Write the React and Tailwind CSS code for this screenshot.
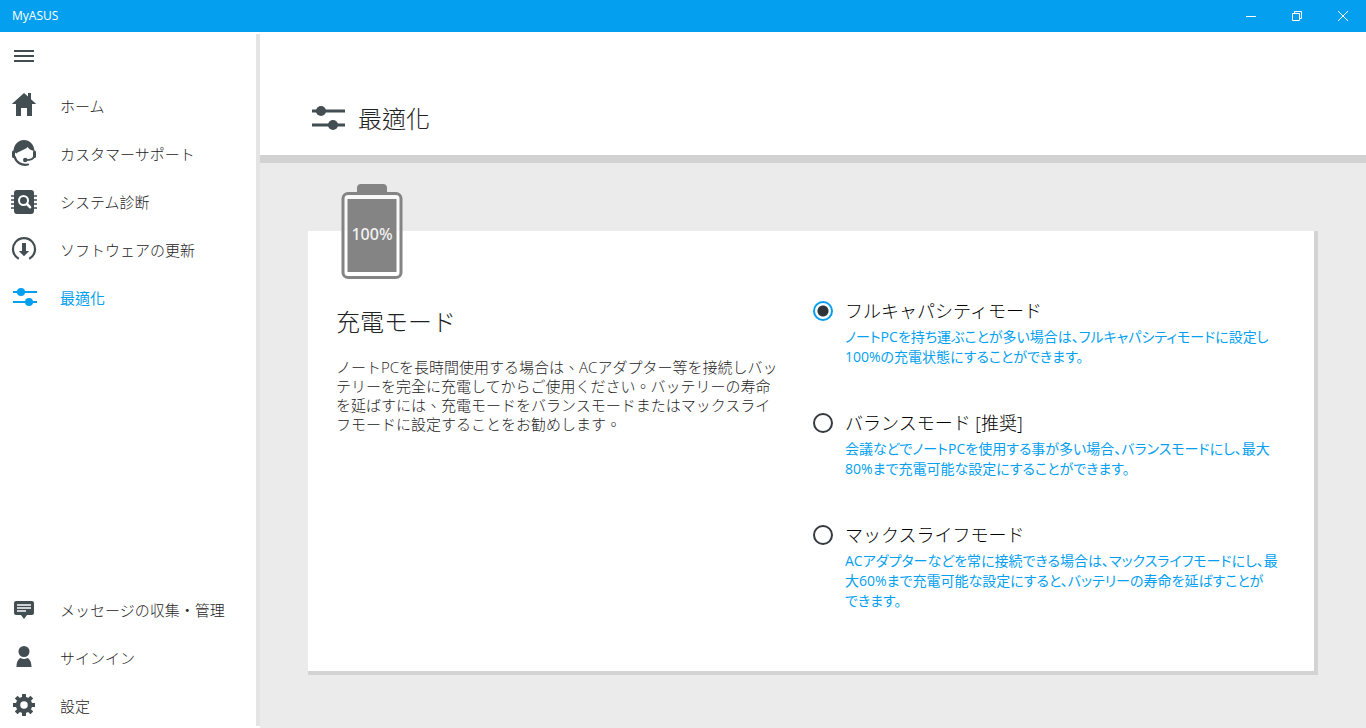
import { useState } from "react";
import clsx from "clsx";

const MODES = [
  {
    id: "full",
    title: "フルキャパシティモード",
    description:
      "ノートPCを持ち運ぶことが多い場合は、フルキャパシティモードに設定し\n100%の充電状態にすることができます。",
  },
  {
    id: "balanced",
    title: "バランスモード [推奨]",
    description:
      "会議などでノートPCを使用する事が多い場合、バランスモードにし、最大\n80%まで充電可能な設定にすることができます。",
  },
  {
    id: "maximum",
    title: "マックスライフモード",
    description:
      "ACアダプターなどを常に接続できる場合は、マックスライフモードにし、最\n大60%まで充電可能な設定にすると、バッテリーの寿命を延ばすことが\nできます。",
  },
];

const CHARGING_TEXT =
  "ノートPCを長時間使用する場合は、ACアダプター等を接続しバッ\nテリーを完全に充電してからご使用ください。バッテリーの寿命\nを延ばすには、充電モードをバランスモードまたはマックスライ\nフモードに設定することをお勧めします。";

function HomeIcon() {
  return (
    <svg width="26" height="26" viewBox="0 0 26 26" fill="currentColor" aria-hidden="true">
      <path d="M13 1 17 4.600V1h3v6.300l5.200 4.700H21v12h-5v-8h-6v8H5V12H.8z" />
    </svg>
  );
}

function SupportIcon() {
  return (
    <svg width="26" height="28" viewBox="0 0 26 28" fill="none" aria-hidden="true">
      <path
        d="M2.500 12C3 5 7.500 1 13 1s10 4 10.500 11c-3-.4-5.500-1.800-6.800-4C14 11 9 11.500 5.200 14.500z"
        fill="currentColor"
      />
      <path
        d="M2.500 13v4.500M23.500 13v4.500"
        stroke="currentColor"
        strokeWidth="3"
        strokeLinecap="round"
      />
      <path
        d="M3.500 17.500c1.500 6 7 9.300 13.500 8"
        stroke="currentColor"
        strokeWidth="2.200"
        strokeLinecap="round"
      />
      <path d="M23 17.500c-.8 3-4 3.700-8 3.700" stroke="currentColor" strokeWidth="1.800" />
      <circle cx="14.200" cy="21" r="2.200" fill="currentColor" />
    </svg>
  );
}

function DiagnosisIcon() {
  return (
    <svg width="26" height="26" viewBox="0 0 26 26" fill="none" aria-hidden="true">
      <rect x="3" y="2" width="20" height="24" rx="3" fill="currentColor" />
      <path
        d="M0 8h3M0 12h3M0 16h3M0 20h3M23 8h3M23 12h3M23 16h3M23 20h3"
        stroke="currentColor"
        strokeWidth="1.600"
      />
      <circle cx="12.500" cy="12.500" r="4.500" stroke="white" strokeWidth="2" />
      <path d="m16 16 3 3.200" stroke="white" strokeWidth="2.600" strokeLinecap="round" />
    </svg>
  );
}

function UpdateIcon() {
  return (
    <svg width="26" height="26" viewBox="0 0 26 26" fill="none" aria-hidden="true">
      <path d="M7.800 22.800A11 11 0 1 1 18.200 22.800" stroke="currentColor" strokeWidth="2.200" />
      <path d="M11 7h4v8h3.200L13 20.200 7.800 15H11z" fill="currentColor" />
    </svg>
  );
}

function SlidersIcon() {
  return (
    <svg width="26" height="20" viewBox="0 0 26 20" fill="none" aria-hidden="true">
      <path d="M2 5h24M2 15h24" stroke="currentColor" strokeWidth="2" />
      <circle cx="10" cy="5" r="4" fill="currentColor" />
      <circle cx="18" cy="15" r="4" fill="currentColor" />
    </svg>
  );
}

function MessageIcon() {
  return (
    <svg width="20" height="20" viewBox="0 0 20 20" fill="none" aria-hidden="true">
      <path
        d="M2 2h16a2 2 0 0 1 2 2v10a2 2 0 0 1-2 2h-5l-3 4-3-4H2a2 2 0 0 1-2-2V4a2 2 0 0 1 2-2z"
        fill="currentColor"
      />
      <path d="M3 6h14M3 9h14M3 12h9" stroke="white" strokeWidth="1.400" />
    </svg>
  );
}

function PersonIcon() {
  return (
    <svg width="20" height="22" viewBox="0 0 20 22" fill="currentColor" aria-hidden="true">
      <circle cx="10" cy="5.500" r="5.500" />
      <path d="M2.500 21c0-5 1.500-7.500 4-9 2 1.200 5 1.200 7 0 2.500 1.500 4 4 4 9z" />
    </svg>
  );
}

function GearIcon() {
  return (
    <svg width="24" height="24" viewBox="0 0 24 24" fill="none" aria-hidden="true">
      <circle cx="12" cy="12" r="6" stroke="currentColor" strokeWidth="4.500" />
      <path
        d="M12 1v4M12 19v4M1 12h4M19 12h4M4.200 4.200l3 3M16.800 16.800l3 3M19.800 4.200l-3 3M7.200 16.800l-3 3"
        stroke="currentColor"
        strokeWidth="4"
      />
    </svg>
  );
}

function BatteryIcon() {
  return (
    <svg width="62" height="96" viewBox="0 0 62 96" role="img" aria-label="100%">
      <path d="M16 10V5a4 4 0 0 1 4-4h22a4 4 0 0 1 4 4v5z" fill="#848484" />
      <rect
        x="2"
        y="10.500"
        width="58"
        height="84"
        rx="5"
        fill="white"
        fillOpacity=".7"
        stroke="#848484"
        strokeWidth="3"
      />
      <rect x="6.500" y="16" width="49" height="73" fill="#848484" />
      <text
        x="31"
        y="57"
        textAnchor="middle"
        fill="#f2f2f2"
        className="font-['Noto_Sans'] text-[16px] font-medium"
      >
        100%
      </text>
    </svg>
  );
}

const TOP_ITEMS = [
  { label: "ホーム", Icon: HomeIcon },
  { label: "カスタマーサポート", Icon: SupportIcon },
  { label: "システム診断", Icon: DiagnosisIcon },
  { label: "ソフトウェアの更新", Icon: UpdateIcon },
  { label: "最適化", Icon: SlidersIcon, active: true },
];

const BOTTOM_ITEMS = [
  { label: "メッセージの収集・管理", Icon: MessageIcon },
  { label: "サインイン", Icon: PersonIcon },
  { label: "設定", Icon: GearIcon },
];

function NavItem({ label, Icon, active }) {
  return (
    <a
      href="#"
      aria-current={active ? "page" : undefined}
      className={clsx("flex h-12 items-center", active ? "text-[#059ff0]" : "text-[#434e52]")}
    >
      <span className="flex w-12 shrink-0 justify-center pt-0.5">
        <Icon />
      </span>
      <span
        className={clsx(
          "pt-1 pl-3 text-[15px] leading-5",
          active ? "font-normal" : "text-[#1d2224]"
        )}
      >
        {label}
      </span>
    </a>
  );
}

function TitleBar() {
  return (
    <header className="flex h-8 shrink-0 items-center justify-between bg-[#059ff0] text-white">
      <span className="pl-3 text-xs font-normal">MyASUS</span>
      <div className="flex h-full">
        <button type="button" aria-label="最小化" className="flex w-[46px] items-center justify-center">
          <svg width="10" height="10" viewBox="0 0 10 10" stroke="currentColor" fill="none">
            <path d="M0 5.500h10" />
          </svg>
        </button>
        <button type="button" aria-label="元に戻す" className="flex w-[46px] items-center justify-center">
          <svg width="10" height="10" viewBox="0 0 10 10" stroke="currentColor" fill="none">
            <path d="M.5 2.500h7v7h-7zM2.500 2.500v-2h7v7h-2" />
          </svg>
        </button>
        <button type="button" aria-label="閉じる" className="flex w-[46px] items-center justify-center">
          <svg width="10" height="10" viewBox="0 0 10 10" stroke="currentColor" fill="none">
            <path d="m0 0 10 10M10 0 0 10" />
          </svg>
        </button>
      </div>
    </header>
  );
}

function Sidebar() {
  return (
    <aside className="flex w-[260px] shrink-0 bg-white">
      <nav className="flex flex-1 flex-col">
        <button
          type="button"
          aria-label="メニュー"
          className="flex size-12 items-center justify-center text-[#434e52]"
        >
          <svg width="20" height="12" viewBox="0 0 20 12" stroke="currentColor" strokeWidth="2">
            <path d="M0 1h20M0 6h20M0 11h20" />
          </svg>
        </button>
        {TOP_ITEMS.map((item) => (
          <NavItem key={item.label} {...item} />
        ))}
        <div className="mt-auto">
          {BOTTOM_ITEMS.map((item) => (
            <NavItem key={item.label} {...item} />
          ))}
        </div>
      </nav>
      <div className="my-0.5 w-1 bg-[#e4e4e4]" />
    </aside>
  );
}

function ModeOption({ mode, checked, onChange }) {
  return (
    <div className="flex min-h-28 gap-3">
      <input
        type="radio"
        id={mode.id}
        name="charging-mode"
        checked={checked}
        onChange={() => onChange(mode.id)}
        aria-describedby={`${mode.id}-description`}
        className="mt-0.5 size-5 shrink-0 appearance-none rounded-full border-2 border-[#333b3f] checked:border-[#059ff0] checked:bg-[radial-gradient(circle,#2d3538_5px,transparent_6px)]"
      />
      <div>
        <label htmlFor={mode.id} className="block text-lg leading-6 text-black">
          {mode.title}
        </label>
        <p
          id={`${mode.id}-description`}
          lang="ja"
          className="mt-1 font-['Open_Sans','Noto_Sans_CJK_JP',sans-serif] text-sm leading-5 font-normal whitespace-pre-line text-[#059ff0] [font-feature-settings:'palt']"
        >
          {mode.description}
        </p>
      </div>
    </div>
  );
}

export default function App() {
  const [selectedMode, setSelectedMode] = useState("full");

  return (
    <div
      lang="zh-Hant"
      className="flex min-h-screen flex-col bg-white font-['Open_Sans','Noto_Sans_CJK_TC',sans-serif] font-light text-[#1d2224]"
    >
      <TitleBar />
      <div className="flex flex-1">
        <Sidebar />
        <main className="flex min-w-0 flex-1 flex-col bg-[#ebebeb]">
          <div className="border-b-8 border-[#d2d2d2] bg-white px-12 pt-[69px] pb-[18px]">
            <h1 className="flex items-center gap-3 text-2xl leading-9 font-light">
              <svg width="38" height="28" viewBox="0 0 38 28" fill="none" className="text-[#434e52]" aria-hidden="true">
                <path d="M4 6h33M4 20h33" stroke="currentColor" strokeWidth="3" />
                <circle cx="13" cy="6" r="5" fill="currentColor" />
                <circle cx="25" cy="20" r="5" fill="currentColor" />
              </svg>
              最適化
            </h1>
          </div>

          <section className="relative mx-12 mt-[68px] mb-[53px] grid grid-cols-2 gap-1 border-r-4 border-b-4 border-[#d3d3d3] bg-white px-7 pb-9">
            <div className="absolute -top-12 left-[33px]">
              <BatteryIcon />
            </div>
            <div className="pt-[75px]">
              <h2 id="charging-title" className="text-2xl leading-8 font-light">
                充電モード
              </h2>
              <p className="mt-5 text-[15px] leading-[19px] whitespace-pre-line">{CHARGING_TEXT}</p>
            </div>
            <div role="radiogroup" aria-labelledby="charging-title" className="pt-[68px]">
              {MODES.map((mode) => (
                <ModeOption
                  key={mode.id}
                  mode={mode}
                  checked={selectedMode === mode.id}
                  onChange={setSelectedMode}
                />
              ))}
            </div>
          </section>
        </main>
      </div>
    </div>
  );
}
